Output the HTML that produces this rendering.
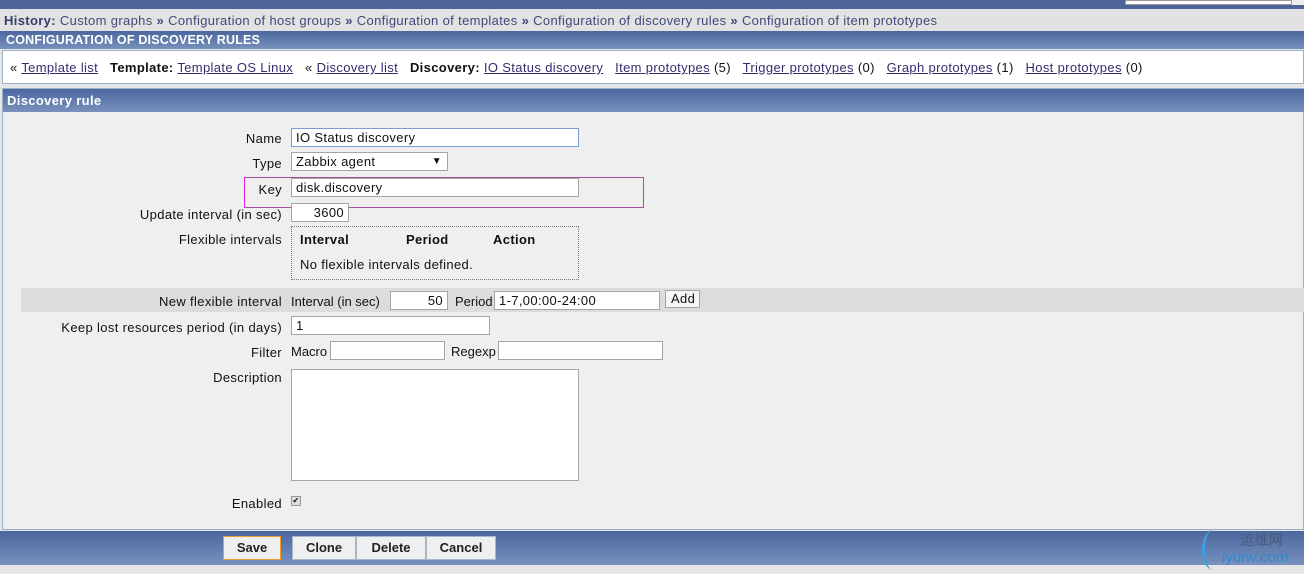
<!DOCTYPE html>
<html><head><meta charset="utf-8"><style>
*{margin:0;padding:0;box-sizing:border-box}
body{width:1304px;height:574px;background:#e6e6e6;font-family:"Liberation Sans",sans-serif;font-size:13px;letter-spacing:0.35px;color:#111;position:relative;overflow:hidden}
.a{position:absolute;white-space:nowrap}
.blue{background:linear-gradient(#4a679e,#7891bd)}
.lnk{color:#3a2b6e;text-decoration:underline}
.in{position:absolute;background:#fff;border:1px solid #a8a69c;height:19px;padding:1px 4px;white-space:nowrap;line-height:15px}
.lb{position:absolute;right:1022px;white-space:nowrap}
.btn{position:absolute;top:536px;height:24px;background:#efefef;border:1px solid #a8b8cc;font-weight:bold;font-size:13px;letter-spacing:0;text-align:center;line-height:22px;color:#222}
</style></head><body>
<div class="a" style="left:0;top:0;width:1304px;height:9px;background:#4d6499"></div>
<div class="a" style="left:1125px;top:0;width:167px;height:5px;background:#fff;border:1px solid #999"></div>
<div class="a" style="left:1292px;top:0;width:12px;height:5px;background:#eee"></div>
<div class="a" style="left:0;top:9px;width:1304px;height:22px;background:#e2e2e2"></div>
<div class="a" style="left:4px;top:13px;color:#3e4a7a"><b style="color:#34406e">History:</b> Custom graphs <b>»</b> Configuration of host groups <b>»</b> Configuration of templates <b>»</b> Configuration of discovery rules <b>»</b> Configuration of item prototypes</div>
<div class="a blue" style="left:0;top:31px;width:1304px;height:18px"></div>
<div class="a" style="left:6px;top:33px;color:#fff;font-weight:bold;font-size:12.5px;letter-spacing:0.2px">CONFIGURATION OF DISCOVERY RULES</div>
<div class="a" style="left:2px;top:50px;width:1302px;height:34px;background:#fff;border:1px solid #9cb0c8"></div>
<div class="a" style="left:10px;top:60px">« <span class="lnk">Template list</span> &nbsp; <b>Template:</b> <span class="lnk">Template OS Linux</span> &nbsp; « <span class="lnk">Discovery list</span> &nbsp; <b>Discovery:</b> <span class="lnk">IO Status discovery</span> &nbsp; <span class="lnk">Item prototypes</span> (5) &nbsp; <span class="lnk">Trigger prototypes</span> (0) &nbsp; <span class="lnk">Graph prototypes</span> (1) &nbsp; <span class="lnk">Host prototypes</span> (0)</div>
<div class="a" style="left:2px;top:88px;width:1302px;height:442px;background:#efefef;border:1px solid #9cb0c8"></div>
<div class="a blue" style="left:3px;top:89px;width:1301px;height:23px"></div>
<div class="a" style="left:7px;top:93px;color:#fff;font-weight:bold;font-size:13px">Discovery rule</div>

<div class="lb" style="top:131px">Name</div>
<div class="in" style="left:291px;top:128px;width:288px;border-color:#7a9cd0">IO Status discovery</div>
<div class="lb" style="top:156px">Type</div>
<div class="in" style="left:291px;top:152px;width:157px">Zabbix agent<span style="position:absolute;right:5px;top:1px;font-size:10px">▼</span></div>
<div class="a" style="left:244px;top:177px;width:400px;height:31px;border:1px solid #a050a0"></div>
<div class="a" style="left:244px;top:177px;width:1px;height:31px;background:#e020e0"></div>
<div class="lb" style="top:182px">Key</div>
<div class="in" style="left:291px;top:178px;width:288px">disk.discovery</div>
<div class="lb" style="top:207px">Update interval (in sec)</div>
<div class="in" style="left:291px;top:203px;width:58px;text-align:right">3600</div>
<div class="lb" style="top:232px">Flexible intervals</div>
<div class="a" style="left:291px;top:226px;width:288px;height:54px;border:1px dotted #777"></div>
<div class="a" style="left:300px;top:232px;font-weight:bold">Interval</div>
<div class="a" style="left:406px;top:232px;font-weight:bold">Period</div>
<div class="a" style="left:493px;top:232px;font-weight:bold">Action</div>
<div class="a" style="left:300px;top:257px">No flexible intervals defined.</div>
<div class="a" style="left:21px;top:288px;width:1283px;height:24px;background:#dcdcdc"></div>
<div class="lb" style="top:294px">New flexible interval</div>
<div class="a" style="left:291px;top:294px;letter-spacing:0">Interval (in sec)</div>
<div class="in" style="left:390px;top:291px;width:58px;text-align:right">50</div>
<div class="a" style="left:455px;top:294px;letter-spacing:0">Period</div>
<div class="in" style="left:494px;top:291px;width:166px">1-7,00:00-24:00</div>
<div class="in" style="left:665px;top:290px;width:35px;height:18px;background:#f6f6f6;padding:0 5px">Add</div>
<div class="lb" style="top:320px">Keep lost resources period (in days)</div>
<div class="in" style="left:291px;top:316px;width:199px">1</div>
<div class="lb" style="top:345px">Filter</div>
<div class="a" style="left:291px;top:344px;letter-spacing:0">Macro</div>
<div class="in" style="left:330px;top:341px;width:115px"></div>
<div class="a" style="left:451px;top:344px;letter-spacing:0">Regexp</div>
<div class="in" style="left:498px;top:341px;width:165px"></div>
<div class="lb" style="top:370px">Description</div>
<div class="in" style="left:291px;top:369px;width:288px;height:112px"></div>
<div class="lb" style="top:496px">Enabled</div>
<div class="a" style="left:291px;top:496px;width:10px;height:10px;border:1px solid #999;background:#ddd;font-size:8px;line-height:8px;text-align:center">✔</div>

<div class="a blue" style="left:0;top:531px;width:1304px;height:34px"></div>
<div class="btn" style="left:223px;width:58px;border:1px solid #f0a030">Save</div>
<div class="btn" style="left:292px;width:64px">Clone</div>
<div class="btn" style="left:356px;width:70px">Delete</div>
<div class="btn" style="left:426px;width:70px">Cancel</div>
<div class="a" style="left:1240px;top:530px;color:#4a5a7a;font-size:14px;font-family:'Noto Sans CJK SC',sans-serif">运维网</div>
<div class="a" style="left:1222px;top:549px;color:#2a8ad0;font-size:15px;letter-spacing:0">iyunv.com</div>
<div class="a" style="left:1202px;top:530px;width:22px;height:40px;border-left:3px solid #3aa0e0;border-radius:50%"></div>
</body></html>
